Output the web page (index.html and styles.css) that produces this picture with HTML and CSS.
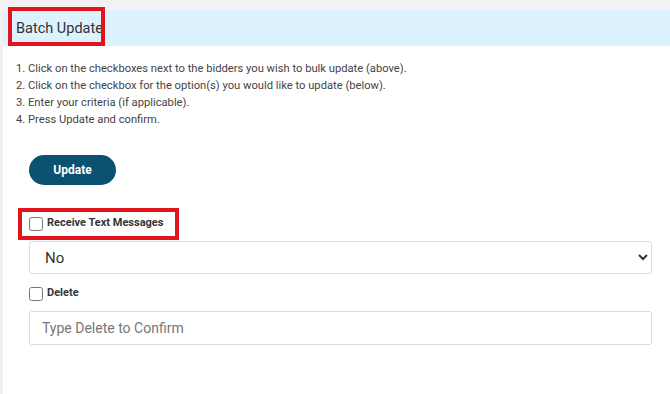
FILE: index.html
```html
<!DOCTYPE html>
<html>
<head>
<meta charset="utf-8">
<link rel="stylesheet" href="styles.css">
</head>
<body>
<div class="page">
  <div class="card">
    <div class="header">Batch Update</div>
    <ol class="steps">
      <li>1. Click on the checkboxes next to the bidders you wish to bulk update (above).</li>
      <li>2. Click on the checkbox for the option(s) you would like to update (below).</li>
      <li>3. Enter your criteria (if applicable).</li>
      <li>4. Press Update and confirm.</li>
    </ol>
    <div class="form">
      <button class="btn" type="button">Update</button>
      <label class="check-row first"><input type="checkbox" class="cb"><span>Receive Text Messages</span></label>
      <select class="control select"><option>No</option><option>Yes</option></select>
      <label class="check-row"><input type="checkbox" class="cb"><span>Delete</span></label>
      <input class="control text" type="text" placeholder="Type Delete to Confirm">
    </div>
  </div>
  <div class="mark mark-title"></div>
  <div class="mark mark-sms"></div>
</div>
</body>
</html>
```
FILE: styles.css
```css
* { box-sizing: border-box; }
html, body { margin: 0; padding: 0; }
body {
  background: #f2f2f2;
  font-family: Roboto, "Liberation Sans", Arial, sans-serif;
  color: #333;
}
.page {
  position: relative;
  padding: 10px 0 0 3px;
  height: 394px;
  overflow: hidden;
}
.card {
  background: #fff;
  height: 100%;
}
.header {
  background: #dcf2fd;
  height: 36px;
  padding-left: 13px;
  display: flex;
  align-items: center;
  font-size: 14.5px;
  color: #333;
}
.steps {
  list-style: none;
  margin: 0;
  padding: 14px 0 0 13px;
  font-size: 11.2px;
  line-height: 17px;
  color: #444;
}
.form {
  display: flex;
  flex-direction: column;
  align-items: flex-start;
  padding: 27px 18px 0 26px;
}
.btn {
  width: 87px;
  height: 30px;
  border: none;
  border-radius: 15px;
  background: #0b5270;
  color: #fff;
  font-family: Roboto, "Liberation Sans", Arial, sans-serif;
  font-weight: 700;
  font-size: 12px;
  padding: 0;
}
.check-row {
  display: flex;
  align-items: center;
  gap: 4px;
  height: 17px;
  line-height: 17px;
  margin: 11px 0 7px;
  font-size: 11px;
  font-weight: 700;
  color: #333;
}
.check-row span { position: relative; top: -1px; }
.check-row.first { margin-top: 30px; margin-bottom: 9px; }
.cb {
  width: 14px;
  height: 14px;
  margin: 0;
}
.control {
  width: 100%;
  border: 1px solid #dcdcdc;
  border-radius: 3px;
  background: #fff;
  font-family: Roboto, "Liberation Sans", Arial, sans-serif;
  font-size: 15px;
  color: #333;
}
.select {
  height: 33px;
  padding: 0 0 0 11px;
}
.text {
  height: 34px;
  padding: 0 12px;
  margin-top: 2px;
  font-size: 14px;
}
.text::placeholder { color: #777; }
.mark {
  position: absolute;
  border: 4px solid #e3151c;
}
.mark-title { left: 8px; top: 7px; width: 97px; height: 39px; }
.mark-sms { left: 18px; top: 208px; width: 161px; height: 32px; }
```
